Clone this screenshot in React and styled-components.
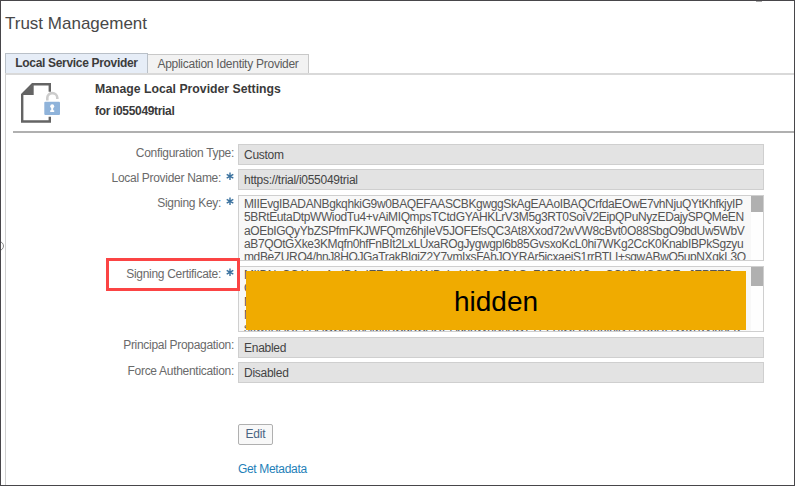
import React from 'react';
import styled, { createGlobalStyle } from 'styled-components';

const Global = createGlobalStyle`
  * { box-sizing: border-box; }
  body { margin: 0; background: #fff; }
`;
const Frame = styled.main`
  position: relative;
  display: flex;
  flex-direction: column;
  width: 795px;
  height: 486px;
  overflow: hidden;
  border: 1px solid #48464a;
  padding-left: 4px;
  background: #fff;
  color: #444;
  font: 12px/14px "Liberation Sans", Arial, sans-serif;
`;
const Title = styled.h1`
  margin: 0;
  height: 52px;
  padding-top: 13px;
  font-size: 17px;
  line-height: 20px;
  font-weight: 400;
  color: #484848;
  white-space: nowrap;
`;
const Tabs = styled.nav`
  display: flex;
  align-items: flex-end;
  height: 20px;
`;
const Tab = styled.button`
  width: ${p => p.$w}px;
  height: ${p => (p.$active ? 20 : 19)}px;
  padding: 0 0 1px;
  border: 1px solid ${p => (p.$active ? '#b9c0c8' : '#c8c8c8')};
  border-bottom: 0;
  border-left-width: ${p => (p.$active ? 1 : 0)}px;
  background: ${p => (p.$active ? '#e6edf7' : '#f2f2f2')};
  color: ${p => (p.$active ? '#3c3c3c' : '#5c5c5c')};
  font: ${p => (p.$active ? 700 : 400)} 12px/14px "Liberation Sans", Arial, sans-serif;
  letter-spacing: ${p => (p.$active ? -0.32 : -0.26)}px;
  white-space: nowrap;
`;
const Panel = styled.section`
  flex: 1;
  border-top: 2px solid #d9d9d9;
  border-left: 1px solid #cfcfcf;
  padding-left: 7px;
`;
const Header = styled.header`
  display: flex;
  height: 58px;
  border-bottom: 2px solid #b0b0b0;
  padding: 7px 0 0 7px;
`;
const DocIcon = styled.svg`
  width: 42px;
  height: 44px;
  flex: none;
`;
const Headings = styled.div`
  padding-left: 33px;
  font-weight: 700;
  color: #3a3a3a;
`;
const Heading = styled.h2`
  margin: 0;
  font-size: 12.25px;
  line-height: 14px;
`;
const Sub = styled.p`
  margin: 8px 0 0;
  font-size: 12px;
  line-height: 14px;
  letter-spacing: -0.33px;
`;
const Form = styled.div`
  display: flex;
  flex-direction: column;
  padding-top: 11px;
`;
const Row = styled.div`
  display: flex;
  height: ${p => p.$h}px;
`;
const Label = styled.label`
  display: flex;
  justify-content: flex-end;
  width: 221px;
  padding-top: ${p => (p.$high ? 1 : 2)}px;
  color: #6a6a6a;
  letter-spacing: -0.3px;
  white-space: nowrap;
`;
const Star = styled.svg`
  width: 8px;
  height: 9px;
  margin: 1px 0 0 5px;
`;
const Field = styled.div`
  width: 526px;
  height: 21px;
  margin-left: 4px;
  padding: 3px 5px;
  border: 1px solid #cfcfcf;
  background: #e3e3e3;
  color: #444;
  letter-spacing: -0.27px;
`;
const Area = styled.div`
  display: flex;
  justify-content: space-between;
  width: 526px;
  height: 66px;
  margin-left: 4px;
  border: 1px solid #cfcfcf;
  background: #f8f8f8;
  overflow: hidden;
`;
const Lines = styled.div`
  padding: 2px 0 0 5px;
  color: #555;
  line-height: 13.3px;
  letter-spacing: -0.372px;
  white-space: pre;
`;
const Line = styled.div`
  width: max-content;
`;
const Track = styled.div`
  width: 12px;
  flex: none;
  background: #fefefe;
`;
const Thumb = styled.div`
  height: ${p => p.$h}px;
  background: #b0b0b0;
`;
const Cover = styled.div`
  position: absolute;
  left: 245px;
  top: 270px;
  width: 500px;
  height: 59px;
  background: #f0ab00;
  color: #000;
  font-size: 28px;
  line-height: 61px;
  text-align: center;
`;
const Highlight = styled.div`
  position: absolute;
  left: 105px;
  top: 257px;
  width: 134px;
  height: 33px;
  border: 3px solid #fb4444;
`;
const Actions = styled.div`
  display: flex;
  flex-direction: column;
  align-items: flex-start;
  gap: 17px;
  padding: 37px 0 0 225px;
`;
const Edit = styled.button`
  width: 35px;
  height: 21px;
  padding: 0 0 1px;
  border: 1px solid #b0b0b0;
  border-radius: 2px;
  background: #f8f8f8;
  color: #4a6583;
  font: 12px/14px "Liberation Sans", Arial, sans-serif;
  letter-spacing: -0.2px;
`;
const Link = styled.a`
  color: #1f7fb8;
  letter-spacing: -0.33px;
`;
const EdgeDot = styled.span`
  position: absolute;
  left: 755px;
  top: 0;
  width: 6px;
  height: 1px;
  background: #aaa;
`;
const EdgeRing = styled.span`
  position: absolute;
  left: -7px;
  top: 240px;
  width: 10px;
  height: 10px;
  border: 1px solid #888;
  border-radius: 50%;
`;

const signingKey = [
  'MIIEvgIBADANBgkqhkiG9w0BAQEFAASCBKgwggSkAgEAAoIBAQCrfdaEOwE7vhNjuQYtKhfkjyIP',
  '5BRtEutaDtpWWiodTu4+vAiMIQmpsTCtdGYAHKLrV3M5g3RT0SoiV2EipQPuNyzEDajySPQMeEN',
  'aOEbIGQyYbZSPfmFKJWFQmz6hjIeV5JOFEfsQC3At8Xxod72wVW8cBvt0O88SbgO9bdUw5WbV',
  'aB7QOtGXke3KMqfn0hfFnBIt2LxLUxaROgJygwgpl6b85GvsxoKcL0hi7WKg2CcK0KnabIBPkSgzyu',
  'mdBeZURO4/hnJ8HOJGaTrakBIqiZ2Y7vmIxsFAhJOYRAr5icxaeiS1rrBTLI+sgwABwO5upNXgkL3Q',
];
const certificate = [
  'MIIDNzCCAh+gAwIBAgIEZvaXnUANBgkqhkiG9w0BAQsFADBMMQswCQYDVQQGEwJERTEP',
  'GA1UEChMGU0FQLVNFMQ8wDQYDVQQLEwZIQ1AgSUQxETAPBgNVBAMTCGkwNTUw',
  'MDE2MTEwOTEzMjgxN1oXDTI2MTEwOTEzMjgxN1owTDELMAkGA1UEBhMCREUxDzA',
  'MQ8wDQYDVQQLEwZIQ1AgSUQxETAPBgNVBAMTCGkwNTUwNDl0cmlhbDCCASIw',
  's9w0BAQEFAAOCAQ8AMIIBCgKCAQEAq33WhDsBO74TY7kGLSoX5I8iD+QUbRLrWg7aVlonZa',
];

const Required = () => (
  <Star viewBox="0 0 8 9">
    <path d="M4 0.500v7.600M0.700 2.400l6.600 3.800M7.300 2.400L0.700 6.200" stroke="#3a719e" strokeWidth="1.400" />
  </Star>
);

export default function App() {
  return (
    <Frame>
      <Global />
      <Title>Trust Management</Title>
      <Tabs>
        <Tab $active $w={143}>Local Service Provider</Tab>
        <Tab $w={161}>Application Identity Provider</Tab>
      </Tabs>
      <Panel>
        <Header>
          <DocIcon viewBox="0 0 42 44">
            <path d="M29.800 9.700V2.200H12.500L2.200 12.500V39.500H29.800V34.700" fill="none" stroke="#646464" strokeWidth="2.400" />
            <path d="M13.700 2V13H2z" fill="#646464" />
            <path d="M27.300 18.500V16a5 4.700 0 0 1 10 -0.300V17" fill="none" stroke="#ccc" strokeWidth="2.600" />
            <rect x="24.300" y="19.700" width="15.700" height="13.300" rx="1" fill="#8fb3da" />
            <circle cx="32.200" cy="24.300" r="2" fill="#fff" />
            <path d="M31.200 24h2v4.200h1v1.800h-4v-1.800h1z" fill="#fff" />
          </DocIcon>
          <Headings>
            <Heading>Manage Local Provider Settings</Heading>
            <Sub>for i055049trial</Sub>
          </Headings>
        </Header>
        <Form>
          <Row $h={25}><Label>Configuration Type:</Label><Field>Custom</Field></Row>
          <Row $h={26}><Label>Local Provider Name:<Required /></Label><Field>https://trial/i055049trial</Field></Row>
          <Row $h={71}>
            <Label $high>Signing Key:<Required /></Label>
            <Area>
              <Lines>{signingKey.map(t => <Line key={t}>{t}</Line>)}</Lines>
              <Track><Thumb $h={16} /></Track>
            </Area>
          </Row>
          <Row $h={71}>
            <Label $high>Signing Certificate:<Required /></Label>
            <Area>
              <Lines>{certificate.map(t => <Line key={t}>{t}</Line>)}</Lines>
              <Track><Thumb $h={19} /></Track>
            </Area>
          </Row>
          <Row $h={25}><Label $high>Principal Propagation:</Label><Field>Enabled</Field></Row>
          <Row $h={25}><Label>Force Authentication:</Label><Field>Disabled</Field></Row>
        </Form>
        <Actions>
          <Edit>Edit</Edit>
          <Link>Get Metadata</Link>
        </Actions>
      </Panel>
      <Highlight />
      <Cover>hidden</Cover>
      <EdgeDot />
      <EdgeRing />
    </Frame>
  );
}
